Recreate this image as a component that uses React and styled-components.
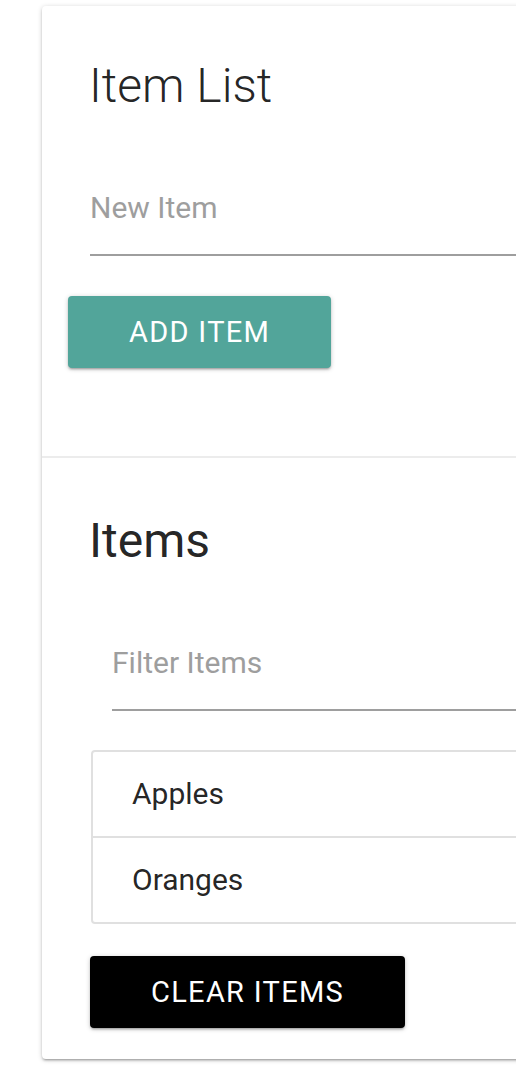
import styled, { createGlobalStyle } from "styled-components";

const GlobalStyle = createGlobalStyle`
  html, body {
    margin: 0;
    padding: 0;
    background: #ffffff;
    overflow: hidden;
  }
  body {
    font-family: Roboto, "Liberation Sans", sans-serif;
    color: rgba(0, 0, 0, 0.87);
  }
`;

const items = ["Apples", "Oranges"];

export default function App() {
  return (
    <Page>
      <GlobalStyle />
      <Card>
        <CardContent>
          <CardTitle>Item List</CardTitle>
          <TextInput type="text" placeholder="New Item" />
          <Button $color="#52a59a">Add Item</Button>
        </CardContent>
        <CardAction>
          <Heading>Items</Heading>
          <TextInput type="text" placeholder="Filter Items" $indent />
          <Collection>
            {items.map((item) => (
              <CollectionItem key={item}>{item}</CollectionItem>
            ))}
          </Collection>
          <Button $color="#000000" $flush>
            Clear Items
          </Button>
        </CardAction>
      </Card>
    </Page>
  );
}

const Page = styled.div`
  padding: 6px 0 40px 42px;
`;

const Card = styled.div`
  width: 640px;
  background: #fff;
  border-radius: 4px;
  box-shadow: 0 2px 2px 0 rgba(0, 0, 0, 0.14), 0 3px 1px -2px rgba(0, 0, 0, 0.12),
    0 1px 5px 0 rgba(0, 0, 0, 0.2);
`;

const CardContent = styled.section`
  padding: 48px 0 88px 47px;
  display: flex;
  flex-direction: column;
  align-items: flex-start;
`;

const CardAction = styled.section`
  border-top: 2px solid rgba(160, 160, 160, 0.2);
  padding: 51px 0 31px 48px;
  display: flex;
  flex-direction: column;
  align-items: flex-start;
`;

const CardTitle = styled.h2`
  margin: 0;
  font-size: 48px;
  line-height: 64px;
  font-weight: 300;
`;

const Heading = styled.h4`
  margin: 0 0 0 -1px;
  font-size: 48px;
  line-height: 64px;
  font-weight: 400;
`;

const TextInput = styled.input`
  box-sizing: border-box;
  align-self: stretch;
  margin: 42px 0 0 ${(p) => (p.$indent ? "22px" : "1px")};
  height: 96px;
  padding: 0;
  border: none;
  border-bottom: 2px solid #9e9e9e;
  outline: none;
  background: transparent;
  font-family: Roboto, "Liberation Sans", sans-serif;
  font-size: 30px;
  color: rgba(0, 0, 0, 0.87);

  &::placeholder {
    color: #9e9e9e;
  }
`;

const Button = styled.button`
  margin: ${(p) => (p.$flush ? "32px 0 0 0" : "40px 0 0 -21px")};
  height: 72px;
  padding: 0 61px;
  border: none;
  border-radius: 4px;
  background: ${(p) => p.$color};
  color: #fff;
  font-family: Roboto, "Liberation Sans", sans-serif;
  font-size: 29px;
  letter-spacing: 1.3px;
  text-transform: uppercase;
  box-shadow: 0 2px 2px 0 rgba(0, 0, 0, 0.14), 0 3px 1px -2px rgba(0, 0, 0, 0.12),
    0 1px 5px 0 rgba(0, 0, 0, 0.2);
`;

const Collection = styled.ul`
  box-sizing: border-box;
  align-self: stretch;
  list-style: none;
  margin: 39px 0 0 1px;
  padding: 0;
  border: 2px solid #e0e0e0;
  border-radius: 4px;
`;

const CollectionItem = styled.li`
  padding: 20px 39px;
  line-height: 44px;
  font-size: 30px;
  color: rgba(0, 0, 0, 0.87);
  border-bottom: 2px solid #e0e0e0;

  &:last-child {
    border-bottom: none;
  }
`;
